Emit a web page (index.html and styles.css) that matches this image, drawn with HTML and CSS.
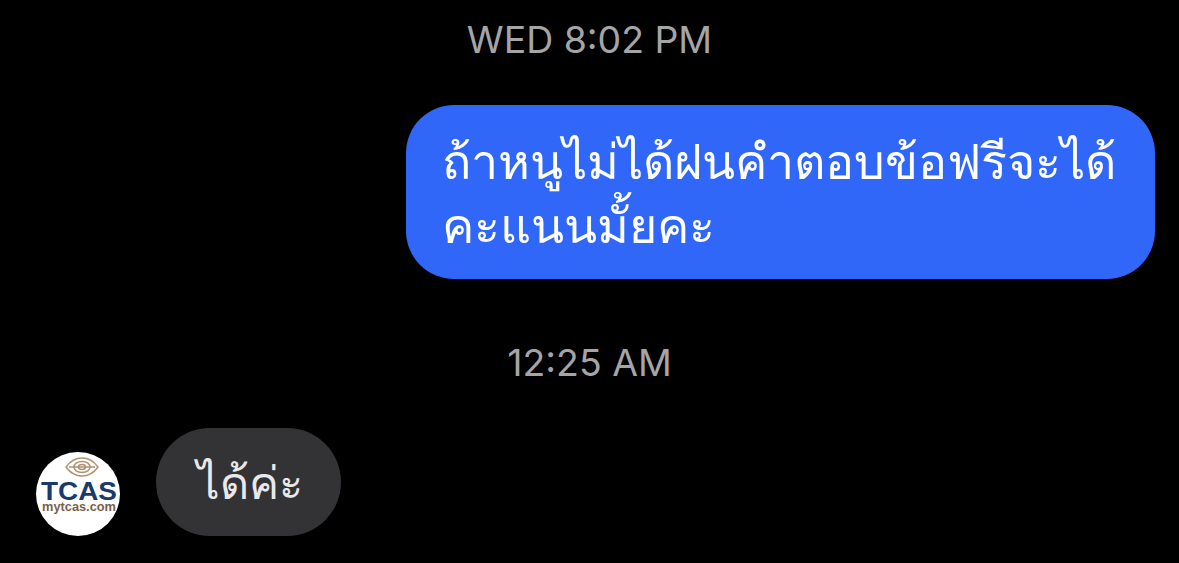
FILE: index.html
```html
<!DOCTYPE html>
<html>
<head>
  <title>Chat</title>
  <link rel="stylesheet" href="styles.css">
</head>
<body>
  <div class="thread">
    <div class="timeLabel timeFirst">WED 8:02 PM</div>
    <div class="rowOut">
      <div class="bubble bubbleOut">ถ้าหนูไม่ได้ฝนคำตอบข้อฟรีจะได้<br>คะแนนมั้ยคะ</div>
    </div>
    <div class="timeLabel timeSecond">12:25 AM</div>
    <div class="rowIn">
      <div class="avatar">
        <svg width="84" height="84" viewBox="0 0 84 84">
          <circle cx="42" cy="42" r="42" fill="#fff"/>
          <g fill="none" stroke="#b0926f" stroke-width="1.5">
            <path d="M30 15C35 8 41 6 46 6C51 6 57 8 62 15C57 22 51 24 46 24C41 24 35 22 30 15Z"/>
            <path d="M33 15H59"/>
            <path d="M46 9.5C41 9.5 38 12 38 15C38 18 41 20.5 46 20.5"/>
            <path d="M46 12.5C44 12.5 42.5 13.5 42.5 15C42.5 16.500 44 17.500 46 17.500"/>
            <path d="M46 9.500C51 9.500 54 12 54 15C54 18 51 20.500 46 20.500"/>
            <path d="M46 12.500C48 12.500 49.500 13.500 49.500 15C49.500 16.500 48 17.500 46 17.500"/>
          </g>
          <text x="43" y="48" textLength="76" lengthAdjust="spacingAndGlyphs" class="logoMain">TCAS</text>
          <text x="43" y="59" textLength="74" lengthAdjust="spacingAndGlyphs" class="logoSub">mytcas.com</text>
        </svg>
      </div>
      <div class="bubble bubbleIn">ได้ค่ะ</div>
    </div>
  </div>
</body>
</html>
```

FILE: styles.css
```css
body {
  margin: 0;
  background-color: #000;
  font-family: "Noto Sans", "Liberation Sans", sans-serif;
}

.thread {
  display: flex;
  flex-direction: column;
  height: 563px;
  overflow: hidden;
}

.timeLabel {
  color: #a5a5a7;
  font-family: Inter, "Liberation Sans", sans-serif;
  font-size: 37.4px;
  line-height: 42px;
  text-align: center;
}

.timeFirst {
  margin-top: 19px;
}

.timeSecond {
  margin-top: 63px;
}

.rowOut {
  display: flex;
  justify-content: flex-end;
  padding-right: 24px;
  margin-top: 44px;
}

.rowIn {
  display: flex;
  align-items: flex-end;
  margin-top: 44px;
  padding-left: 36px;
}

.avatar {
  width: 84px;
  height: 84px;
  margin-right: 36px;
}

.bubble {
  color: #fff;
  font-size: 48.4px;
  line-height: 64px;
}

.bubbleOut {
  width: 749px;
  height: 174px;
  box-sizing: border-box;
  padding: 23px 36px;
  background-color: #3067f8;
  border-radius: 48px;
  white-space: nowrap;
}

.bubbleIn {
  width: 185px;
  box-sizing: border-box;
  padding: 22px 0 22px 41px;
  background-color: #333336;
  border-radius: 54px;
  color: #e9e9eb;
  font-size: 45px;
}

.logoMain {
  font-family: "Liberation Sans", sans-serif;
  font-size: 25px;
  font-weight: bold;
  fill: #1b3a6b;
  text-anchor: middle;
}

.logoSub {
  font-family: "Liberation Sans", sans-serif;
  font-size: 13.5px;
  font-weight: bold;
  fill: #7d5f48;
  text-anchor: middle;
}
```
